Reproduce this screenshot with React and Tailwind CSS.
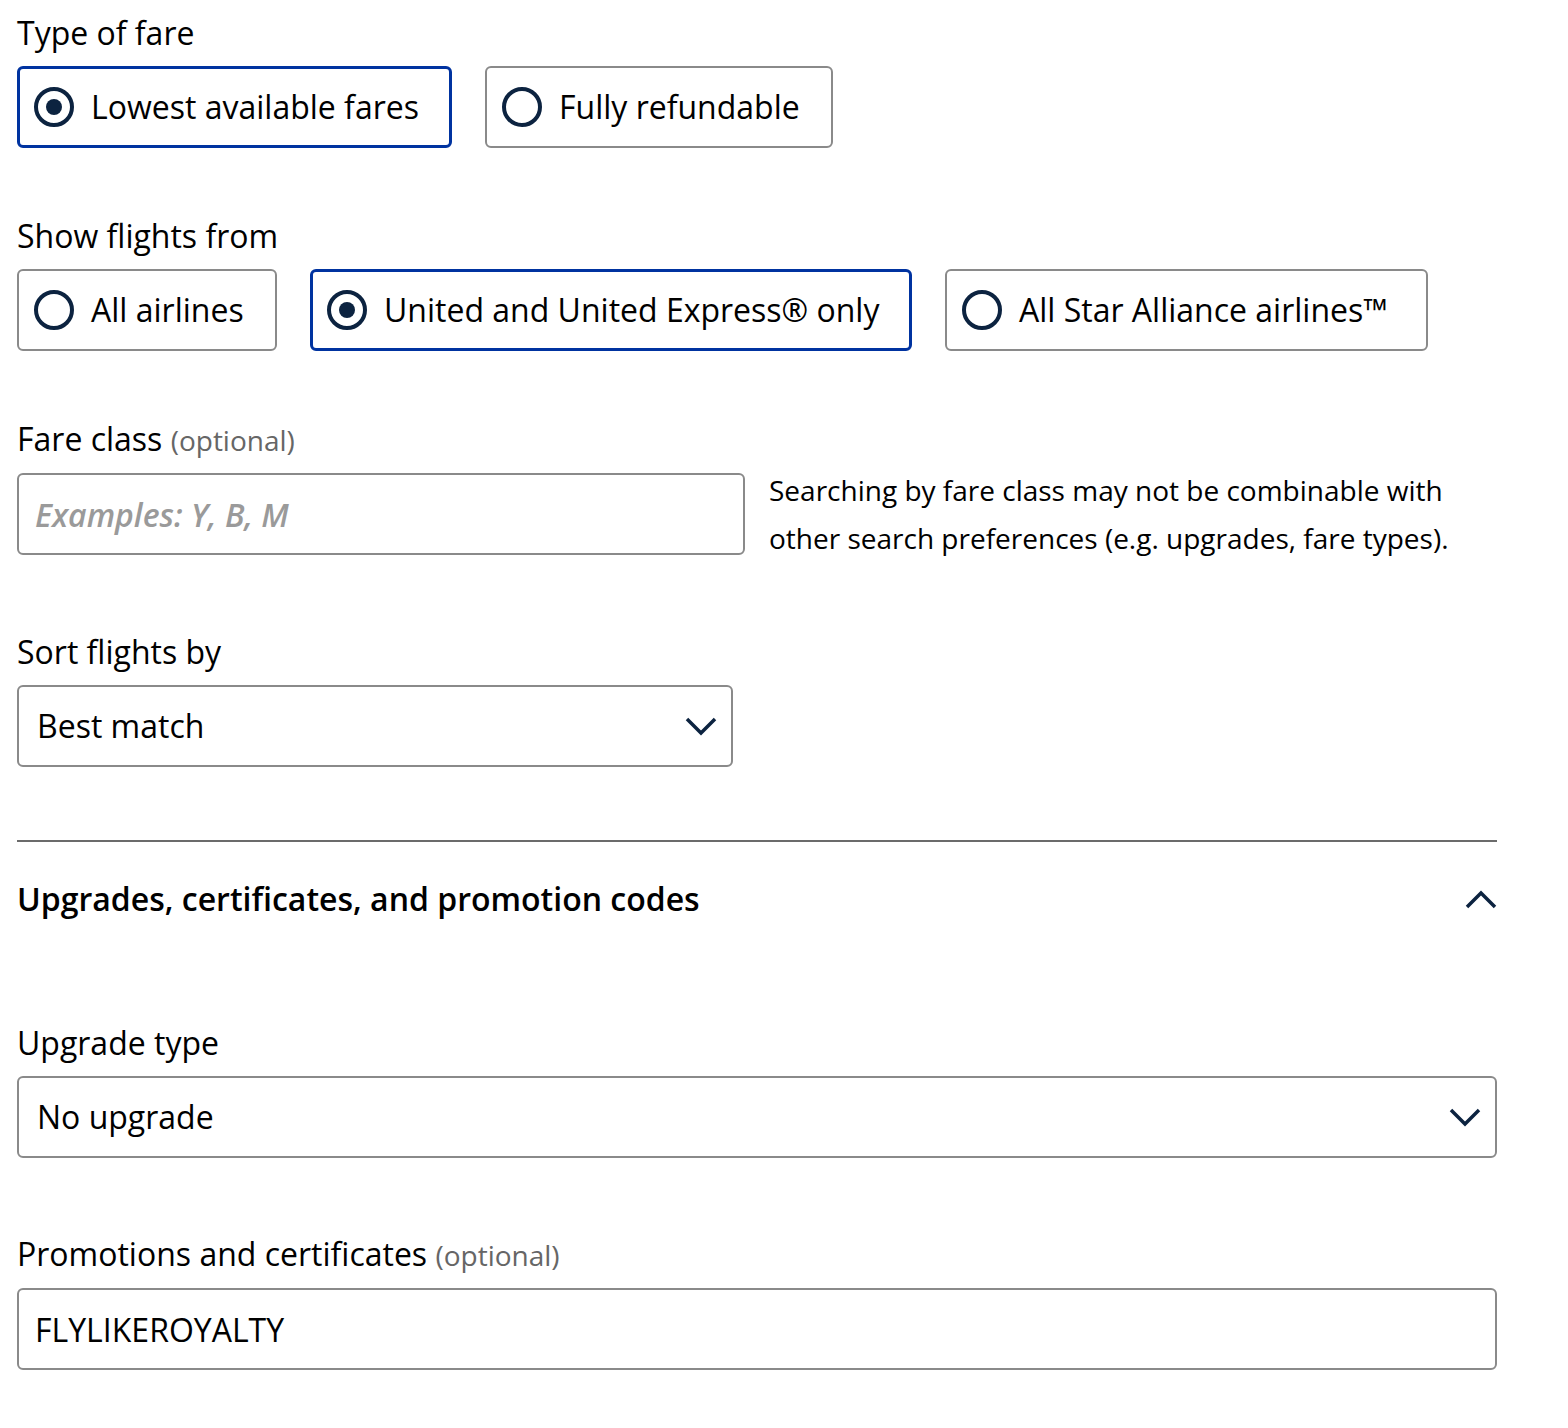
import { useState } from "react"

function Radio({ checked }) {
	return (
		<span className="flex h-[40px] w-[40px] shrink-0 items-center justify-center rounded-full border-[4px] border-[#0c2340]">
			{checked && <span className="h-[16px] w-[16px] rounded-full bg-[#0c2340]" />}
		</span>
	)
}

function RadioBox({ label, checked, onClick, width }) {
	return (
		<button
			type="button"
			onClick={onClick}
			className={
				checked
					? `flex h-[82px] items-center gap-[17px] rounded-[6px] border-[3px] border-[#0033a0] pl-[14px] pr-[24px] text-left ${width}`
					: `flex h-[82px] items-center gap-[17px] rounded-[6px] border-[2px] border-[#8a8a8a] pl-[15px] pr-[25px] text-left ${width}`
			}
		>
			<Radio checked={checked} />
			<span className="whitespace-nowrap text-[32px] text-black">{label}</span>
		</button>
	)
}

function Chevron({ up }) {
	return (
		<svg width="32" height="20" viewBox="0 0 32 20" fill="none">
			{up ? (
				<path d="M2 18 L16 4 L30 18" stroke="#0c2340" strokeWidth="3.5" />
			) : (
				<path d="M2 3 L16 17 L30 3" stroke="#0c2340" strokeWidth="3.5" />
			)}
		</svg>
	)
}

export default function App() {
	const [fare, setFare] = useState("lowest")
	const [airline, setAirline] = useState("united")

	return (
		<div className="min-h-[1428px] bg-white px-[17px] pt-[13px] text-black" style={{ fontFamily: "'Open Sans', sans-serif" }}>
			<div className="text-[32px] leading-[40px]">Type of fare</div>
			<div className="mt-[13px] flex gap-[33px]">
				<RadioBox label="Lowest available fares" checked={fare === "lowest"} onClick={() => setFare("lowest")} width="w-[435px]" />
				<RadioBox label="Fully refundable" checked={fare === "refund"} onClick={() => setFare("refund")} width="w-[348px]" />
			</div>

			<div className="mt-[68px] text-[32px] leading-[40px]">Show flights from</div>
			<div className="mt-[13px] flex gap-[33px]">
				<RadioBox label="All airlines" checked={airline === "all"} onClick={() => setAirline("all")} width="w-[260px]" />
				<RadioBox label="United and United Express® only" checked={airline === "united"} onClick={() => setAirline("united")} width="w-[602px]" />
				<RadioBox label="All Star Alliance airlines™" checked={airline === "star"} onClick={() => setAirline("star")} width="w-[483px]" />
			</div>

			<div className="mt-[68px] text-[32px] leading-[40px]">
				Fare class <span className="text-[28px] text-[#666]">(optional)</span>
			</div>
			<div className="mt-[13px] flex items-start gap-[24px]">
				<input
					placeholder="Examples: Y, B, M"
					className="h-[82px] w-[728px] rounded-[6px] border-[2px] border-[#8a8a8a] px-[16px] text-[32px] outline-none placeholder:font-semibold placeholder:italic placeholder:text-[#9a9a9a]"
				/>
				<p className="mt-[-7px] text-[28px] leading-[48px]">
					Searching by fare class may not be combinable with<br />
					other search preferences (e.g. upgrades, fare types).
				</p>
			</div>

			<div className="mt-[70px] text-[32px] leading-[40px]">Sort flights by</div>
			<div className="mt-[13px] flex h-[82px] w-[716px] items-center justify-between rounded-[6px] border-[2px] border-[#8a8a8a] pl-[18px] pr-[14px]">
				<span className="text-[32px]">Best match</span>
				<Chevron />
			</div>

			<div className="mt-[73px] w-[1480px] border-t-[2px] border-[#6b6b6b]" />
			<div className="mt-[33px] flex w-[1480px] items-center justify-between">
				<span className="text-[32px] font-semibold">Upgrades, certificates, and promotion codes</span>
				<Chevron up />
			</div>

			<div className="mt-[100px] text-[32px] leading-[40px]">Upgrade type</div>
			<div className="mt-[13px] flex h-[82px] w-[1480px] items-center justify-between rounded-[6px] border-[2px] border-[#8a8a8a] pl-[18px] pr-[14px]">
				<span className="text-[32px]">No upgrade</span>
				<Chevron />
			</div>

			<div className="mt-[76px] text-[32px] leading-[40px]">
				Promotions and certificates <span className="text-[28px] text-[#666]">(optional)</span>
			</div>
			<input
				defaultValue="FLYLIKEROYALTY"
				className="mt-[13px] block h-[82px] w-[1480px] rounded-[6px] border-[2px] border-[#8a8a8a] px-[16px] text-[32px] outline-none"
			/>
		</div>
	)
}
